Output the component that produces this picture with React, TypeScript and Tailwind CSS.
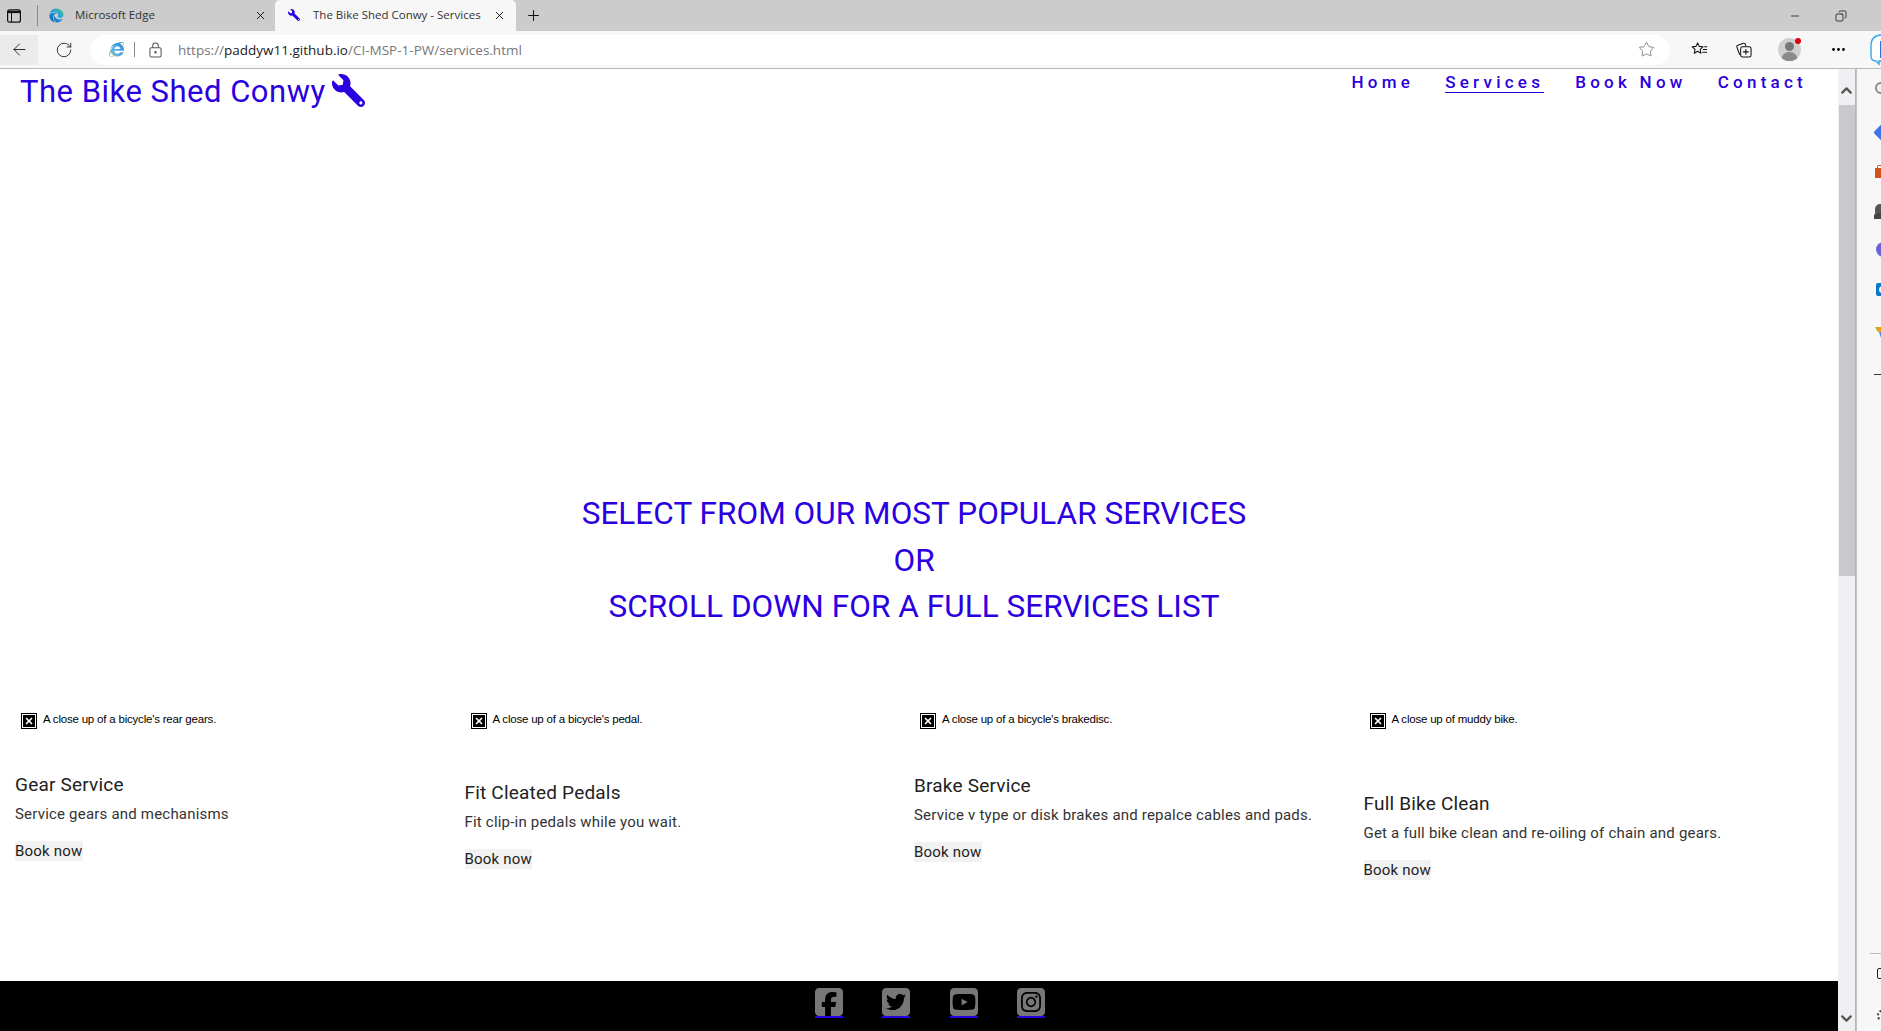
import React from "react";
import { ArrowLeft, RotateCw, Plus, X, Minus, Star, Copy, MoreHorizontal, ChevronUp, ChevronDown } from "lucide-react";
import { FaWrench, FaInternetExplorer } from "react-icons/fa";
import { FaSquareFacebook, FaSquareTwitter, FaSquareYoutube, FaSquareInstagram } from "react-icons/fa6";
import { RiEdgeNewFill } from "react-icons/ri";

type Card = {
  alt: string;
  title: string;
  text: string;
  titleTop: string;
};

const cards: Card[] = [
  { alt: "A close up of a bicycle's rear gears.", title: "Gear Service", text: "Service gears and mechanisms", titleTop: "mt-[39px]" },
  { alt: "A close up of a bicycle's pedal.", title: "Fit Cleated Pedals", text: "Fit clip-in pedals while you wait.", titleTop: "mt-[47px]" },
  { alt: "A close up of a bicycle's brakedisc.", title: "Brake Service", text: "Service v type or disk brakes and repalce cables and pads.", titleTop: "mt-[40px]" },
  { alt: "A close up of muddy bike.", title: "Full Bike Clean", text: "Get a full bike clean and re-oiling of chain and gears.", titleTop: "mt-[58px]" },
];

const navLinks = ["Home", "Services", "Book Now", "Contact"];
const socials = [FaSquareFacebook, FaSquareTwitter, FaSquareYoutube, FaSquareInstagram];

function BrokenImage({ alt }: { alt: string }) {
  return (
    <div className="flex h-[22px] items-start gap-[6px] pl-[6px] font-['Liberation_Sans',sans-serif] text-[11.5px] leading-[14px] tracking-[-0.2px] text-black">
      <span className="mt-[1px] flex h-[16px] w-[16px] items-center justify-center border border-black">
        <span className="flex h-[12px] w-[12px] items-center justify-center bg-black">
          <X className="h-[10px] w-[10px] text-white" strokeWidth={4} />
        </span>
      </span>
      <span>{alt}</span>
    </div>
  );
}

function Gradients() {
  return (
    <svg className="h-0 w-0 absolute">
      <defs>
        <linearGradient id="edgeGrad" x1="0" y1="1" x2="1" y2="0">
          <stop offset="0" stopColor="#0c59a4" />
          <stop offset="0.55" stopColor="#1b9de2" />
          <stop offset="1" stopColor="#5bd27a" />
        </linearGradient>
        <linearGradient id="ieGrad" x1="0" y1="1" x2="1" y2="0">
          <stop offset="0" stopColor="#e8c04a" />
          <stop offset="0.35" stopColor="#58b4e8" />
          <stop offset="1" stopColor="#2a86d0" />
        </linearGradient>
      </defs>
    </svg>
  );
}

function Chrome() {
  return (
    <>
      <div className="flex h-[31px] items-stretch bg-[#cbcccb] font-['Open_Sans',sans-serif] text-[11.5px] text-[#333]">
        <div className="flex w-[37px] items-center pl-[7px]">
          <svg viewBox="0 0 14 14" className="h-[14px] w-[14px]" fill="none" stroke="#111">
            <rect x="0.6" y="0.8" width="12.8" height="12.4" rx="2" strokeWidth="1.2" />
            <path d="M1 3h12" strokeWidth="2.2" />
            <path d="M4.5 3v10" strokeWidth="1" />
          </svg>
        </div>
        <div className="my-[5px] w-px bg-[#8a8a8a]" />
        <div className="flex w-[237px] items-center pb-[1px] pl-[10px] pr-[8px]">
          <RiEdgeNewFill className="h-[17px] w-[17px] fill-[url(#edgeGrad)]" />
          <span className="ml-[10px] mb-[1px] flex-1 whitespace-nowrap">Microsoft Edge</span>
          <X className="h-[13px] w-[13px] text-black" strokeWidth={1.6} />
        </div>
        <div className="flex w-[241px] items-center rounded-t-[5px] bg-[#f7f7f7] pb-[1px] pl-[13px] pr-[10px]">
          <FaWrench className="h-[12px] w-[12px] -scale-x-100 text-[#2b00e0]" />
          <span className="ml-[13px] mb-[1px] flex-1 whitespace-nowrap text-[11.5px]">The Bike Shed Conwy - Services</span>
          <X className="h-[13px] w-[13px] text-black" strokeWidth={1.6} />
        </div>
        <div className="flex w-[34px] items-center justify-center">
          <Plus className="h-[17px] w-[17px] text-black" strokeWidth={1.3} />
        </div>
        <div className="flex flex-1 items-center justify-end">
          <Minus className="h-[12px] w-[12px] text-black" strokeWidth={1.4} />
          <Copy className="ml-[34px] mr-[34px] h-[12px] w-[12px] -scale-y-100 rotate-180 text-black" strokeWidth={1.4} />
        </div>
      </div>
      <div className="flex h-[38px] items-center border-b border-[#b8b8b8] bg-[#f7f7f7]">
        <div className="flex h-[30px] w-[38px] items-center justify-center bg-[#ebebeb]">
          <ArrowLeft className="h-[19px] w-[19px] text-[#222]" strokeWidth={1.2} />
        </div>
        <div className="flex w-[52px] items-center justify-center">
          <RotateCw className="h-[18px] w-[18px] text-[#222]" strokeWidth={1.2} />
        </div>
        <div className="flex h-[30px] w-[1580px] shrink-0 items-center rounded-full bg-white pl-[19px] pr-[15px] font-['Open_Sans',sans-serif] text-[13.5px]">
          <FaInternetExplorer className="h-[15px] w-[15px] fill-[url(#ieGrad)]" />
          <span className="ml-[10px] h-[15px] w-px bg-[#888]" />
          <svg viewBox="0 0 14 16" className="ml-[14px] h-[16px] w-[13px]" fill="none" stroke="#555" strokeWidth="1.1">
            <rect x="1" y="5.5" width="12" height="10" rx="1.5" />
            <path d="M4 5.5V3.5a3 3 0 0 1 6 0v2" />
            <circle cx="7" cy="10.5" r="0.8" fill="#555" />
          </svg>
          <span className="ml-[16px] mt-[1px] flex-1 whitespace-nowrap text-[#777]">
            https://<span className="text-[#222]">paddyw11.github.io</span>/CI-MSP-1-PW/services.html
          </span>
          <Star className="h-[17px] w-[17px] text-[#666]" strokeWidth={1.1} />
        </div>
        <div className="flex flex-1 items-center overflow-hidden">
          <svg viewBox="0 0 18 18" className="ml-[21px] h-[17px] w-[17px] shrink-0" fill="none" stroke="#111" strokeWidth="1.1" strokeLinejoin="round">
            <path d="M7 2l1.7 3.7 4 .5-3 2.7.8 4-3.5-2-3.5 2 .8-4-3-2.7 4-.5z" />
            <path d="M12.5 9h4.5M12 12h5M14 6h3" />
          </svg>
          <svg viewBox="0 0 18 18" className="ml-[27px] h-[17px] w-[17px] shrink-0" fill="none" stroke="#111" strokeWidth="1.1">
            <path d="M5 14.5L2 6.5a1.5 1.5 0 0 1 1-2l6-2a1.5 1.5 0 0 1 2 1l.5 2" />
            <rect x="6" y="6" width="11" height="11" rx="2" />
            <path d="M11.5 8.5v6M8.5 11.5h6" />
          </svg>
          <div className="relative ml-[26px] h-[23px] w-[23px] shrink-0 overflow-hidden rounded-full bg-[#cfcfcf]">
            <span className="absolute left-[7px] top-[4px] h-[9px] w-[9px] rounded-full bg-[#777]" />
            <span className="absolute left-[3px] top-[14px] h-[10px] w-[17px] rounded-t-full bg-[#8a8a8a]" />
          </div>
          <span className="relative -ml-[6px] -mt-[18px] h-[6px] w-[6px] shrink-0 rounded-full bg-[#e3000f]" />
          <MoreHorizontal className="ml-[29px] h-[17px] w-[17px] shrink-0 text-black" strokeWidth={2} />
          <svg viewBox="0 0 24 32" className="ml-[23px] h-[32px] w-[24px] shrink-0" fill="white" stroke="#3aa3e8" strokeWidth="1.4">
            <path d="M12 1C5 1 1 5 1 12v10c0 4 2 5 5 5l3 3v-3h6c6 0 8-5 8-12 0-9-4-14-11-14z" />
            <rect x="10" y="7" width="4" height="17" fill="#2f6fe0" stroke="none" />
          </svg>
        </div>
      </div>
    </>
  );
}

function Sidebar() {
  return (
    <div className="flex w-[25px] flex-col overflow-hidden border-l border-[#c2c2c2] bg-[#f7f7f8]">
      <div className="relative flex-1">
        <span className="absolute left-[18px] top-[13px] h-[12px] w-[12px] rounded-full border-2 border-[#8a8a8a]" />
        <span className="absolute left-[19px] top-[57px] h-[13px] w-[13px] rotate-45 rounded-[2px] bg-[#3f73ea]" />
        <span className="absolute left-[18px] top-[99px] h-[10px] w-[12px] bg-[#d1521d]" />
        <span className="absolute left-[20px] top-[96px] h-[3px] w-[8px] rounded-t-[2px] border border-b-0 border-[#d1521d]" />
        <span className="absolute left-[18px] top-[135px] h-[9px] w-[10px] rounded-t-full bg-[#555]" />
        <span className="absolute left-[17px] top-[144px] h-[6px] w-[12px] rounded-t-[3px] bg-[#444]" />
        <span className="absolute left-[19px] top-[173px] h-[15px] w-[12px] rounded-l-full bg-[#6a63d6]" />
        <span className="absolute left-[19px] top-[214px] h-[13px] w-[12px] rounded-[2px] bg-[#0a78c8]" />
        <span className="absolute left-[22px] top-[217px] h-[7px] w-[7px] rounded-full border-2 border-white" />
        <svg viewBox="0 0 10 12" className="absolute left-[18px] top-[257px] h-[12px] w-[10px]">
          <path d="M0 1h10v5H3z" fill="#e2a21b" />
          <path d="M4 6h6v6H6z" fill="#3f8fd8" />
        </svg>
        <span className="absolute left-[17px] top-[305px] h-px w-[8px] bg-[#333]" />
        <span className="absolute left-[13px] top-[884px] h-px w-[12px] bg-[#bbb]" />
        <span className="absolute left-[20px] top-[899px] h-[11px] w-[8px] rounded-[2px] border border-[#222]" />
        <span className="absolute left-[20px] top-[941px] h-[11px] w-[10px] rounded-full border-2 border-dotted border-[#333]" />
      </div>
    </div>
  );
}

export default function App() {
  return (
    <div className="relative flex h-[1031px] w-[1881px] flex-col overflow-hidden bg-white">
      <Gradients />
      <Chrome />
      <div className="flex min-h-0 flex-1">
        <div className="flex min-w-0 flex-1 flex-col font-['Roboto',sans-serif]">
          <header className="flex h-[52px] items-start justify-between">
            <div className="ml-[20px] mt-[3px] flex items-center text-[31px] leading-[40px] tracking-[0.5px] text-[#2b00e0]">
              <span>The Bike Shed Conwy</span>
              <FaWrench className="-mt-[3px] ml-[6px] h-[33px] w-[33px] -scale-x-100" />
            </div>
            <nav className="mr-[31px] mt-[3px] flex gap-[31px] text-[17px] font-medium leading-[20px] tracking-[4.25px] text-[#2b00e0]">
              {navLinks.map((link) => (
                <a key={link} className={link === "Services" ? "border-b border-[#2b00e0]" : ""}>
                  {link}
                </a>
              ))}
            </nav>
          </header>
          <h2 className="mr-[10px] mt-[370px] text-center text-[31.5px] leading-[46.7px] tracking-[0.05px] text-[#2b00e0]">
            SELECT FROM OUR MOST POPULAR SERVICES
            <br />
            OR
            <br />
            SCROLL DOWN FOR A FULL SERVICES LIST
          </h2>
          <div className="mr-[10px] mt-[81px] grid grid-cols-4 px-[15px]">
            {cards.map((c) => (
              <div key={c.title} className="min-w-0">
                <BrokenImage alt={c.alt} />
                <h3 className={`${c.titleTop} text-[19px] leading-[24px] tracking-[0.2px] text-[#222]`}>{c.title}</h3>
                <p className="mt-[7px] text-[15px] leading-[20px] tracking-[0.2px] text-[#333]">{c.text}</p>
                <a className="mt-[17px] inline-block bg-[#f2f2f3] text-[15px] leading-[20px] tracking-[0.2px] text-[#222]">Book now</a>
              </div>
            ))}
          </div>
          <footer className="mt-auto flex h-[50px] items-start justify-center gap-[39.5px] bg-black pl-[22px] pt-[7px]">
            {socials.map((Icon, i) => (
              <span key={i} className="h-[30px] border-b-2 border-[#2b00e0]">
                <Icon className="-mt-[2px] block h-[32px] w-[28px] text-[#777]" />
              </span>
            ))}
          </footer>
        </div>
        <div className="flex w-[18px] flex-col items-center border-r border-[#b5b5b5] bg-[#f0f0f2]">
          <ChevronUp className="mt-[13px] h-[17px] w-[17px] text-[#555]" strokeWidth={3.2} />
          <div className="mt-[6px] h-[471px] w-[16px] bg-[#c9c9cb]" />
          <ChevronDown className="mb-[4px] mt-auto h-[17px] w-[17px] text-[#555]" strokeWidth={3.2} />
        </div>
        <Sidebar />
      </div>
    </div>
  );
}
